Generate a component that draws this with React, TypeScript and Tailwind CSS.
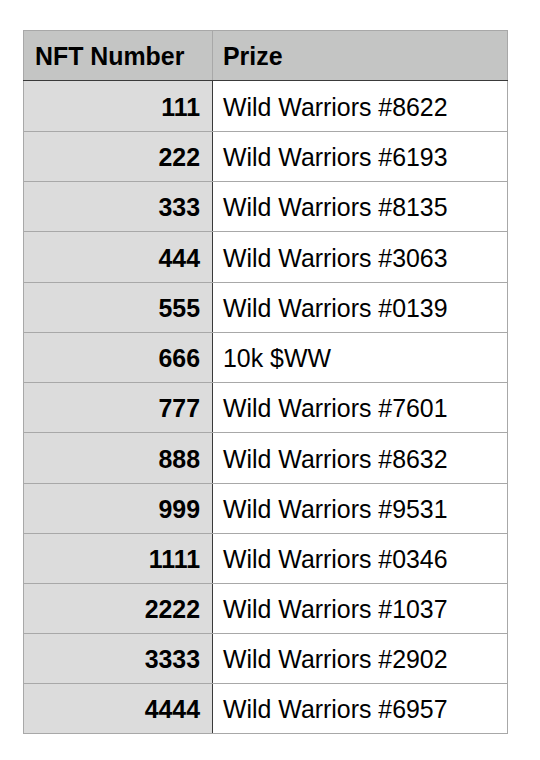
import React from "react";

const rows: [string, string, boolean][] = [
  ["111", "Wild Warriors #8622", true],
  ["222", "Wild Warriors #6193", false],
  ["333", "Wild Warriors #8135", false],
  ["444", "Wild Warriors #3063", true],
  ["555", "Wild Warriors #0139", false],
  ["666", "10k $WW", false],
  ["777", "Wild Warriors #7601", false],
  ["888", "Wild Warriors #8632", true],
  ["999", "Wild Warriors #9531", false],
  ["1111", "Wild Warriors #0346", false],
  ["2222", "Wild Warriors #1037", false],
  ["3333", "Wild Warriors #2902", false],
  ["4444", "Wild Warriors #6957", false],
];

export default function App() {
  return (
    <div
      className="w-[540px] h-[760px] bg-white pt-[30px] pl-[23px]"
      style={{ fontFamily: '"Liberation Sans", Arial, sans-serif' }}
    >
      <table className="border-collapse w-[485px] text-[24.9px] text-black">
        <thead>
          <tr className="h-[50px]">
            <th className="w-[189px] bg-[#c4c5c4] border border-[#a8a8a8] border-b-[#3a3a3a] text-left font-bold pl-[11px] pr-[12px] pt-[3px]">
              NFT Number
            </th>
            <th className="bg-[#c4c5c4] border border-[#a8a8a8] border-b-[#3a3a3a] text-left font-bold pl-[10px] pt-[3px]">
              Prize
            </th>
          </tr>
        </thead>
        <tbody>
          {rows.map(([n, p, tall]) => (
            <tr key={n} className={tall ? "h-[51px]" : "h-[50px]"}>
              <td className="bg-[#dcdcdc] border border-[#a8a8a8] border-r-[#3a3a3a] text-right font-bold pr-[12px] pt-[3px]">
                {n}
              </td>
              <td className="bg-white border border-[#a8a8a8] pl-[10px] pt-[3px]">{p}</td>
            </tr>
          ))}
        </tbody>
      </table>
    </div>
  );
}
